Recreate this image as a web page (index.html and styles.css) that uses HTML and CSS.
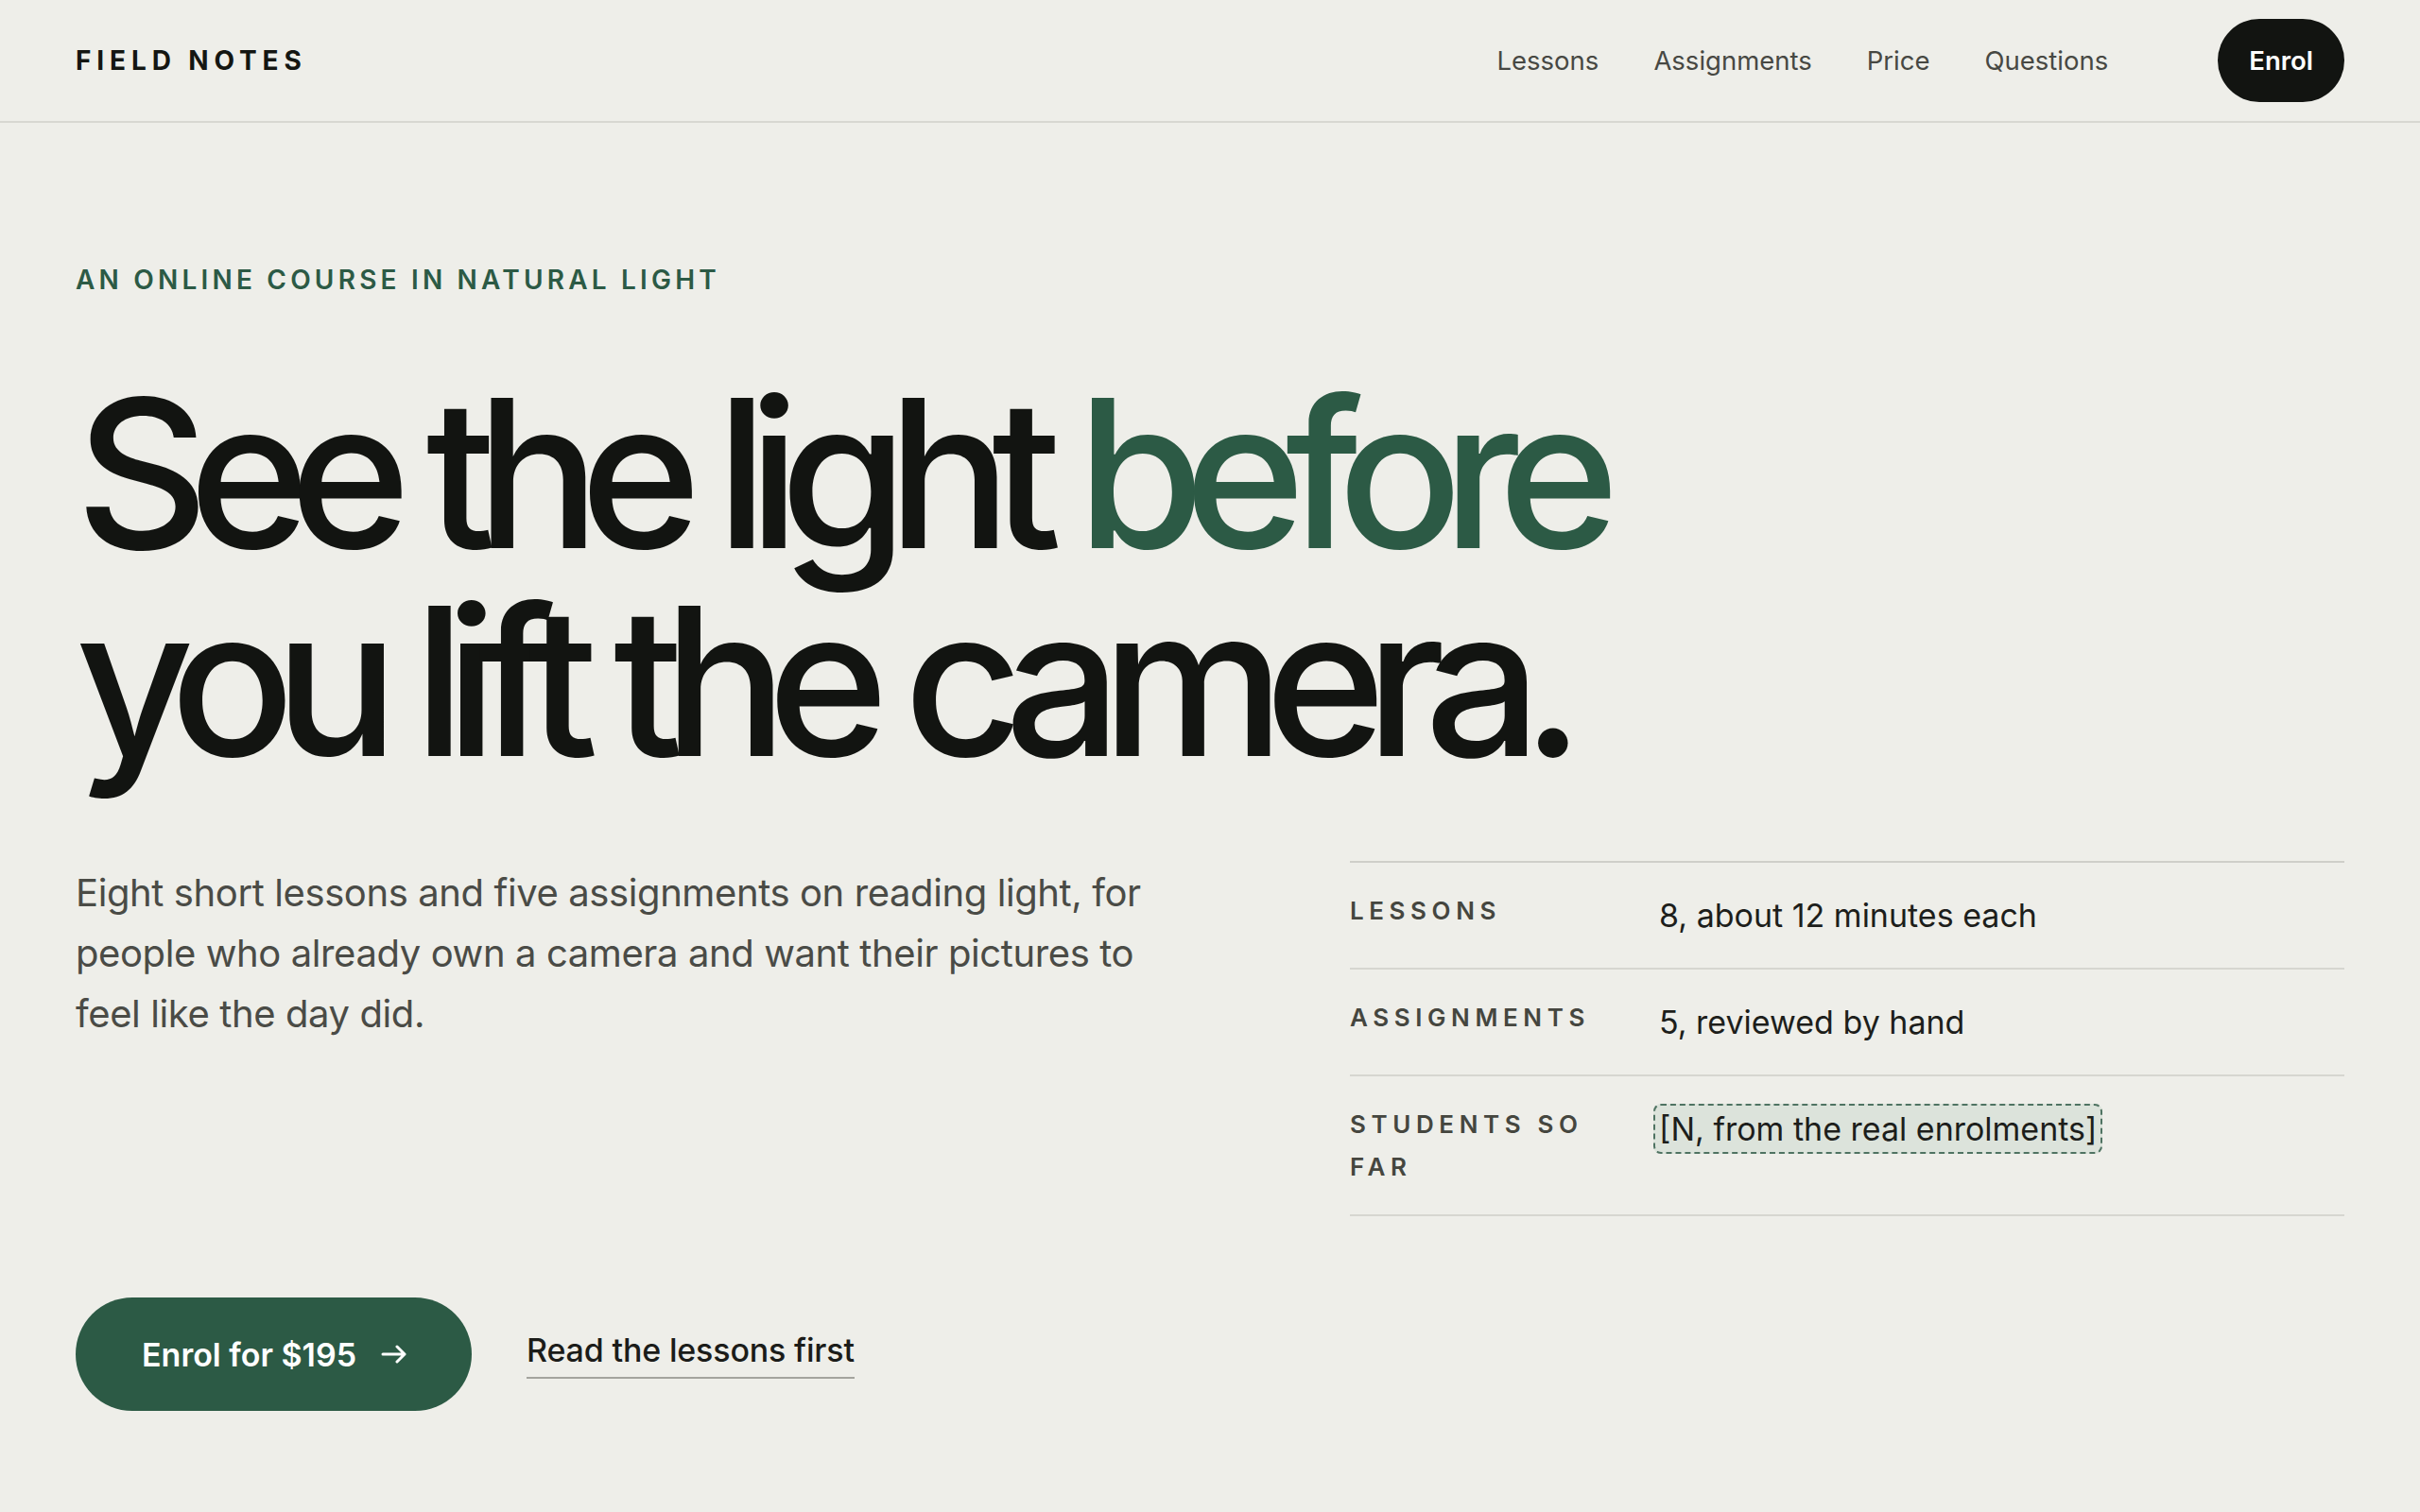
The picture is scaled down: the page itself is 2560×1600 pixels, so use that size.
FILE: index.html
```html
<!DOCTYPE html>
<html lang="en">
<head>
<meta charset="utf-8">
<title>Field Notes — An online course in natural light</title>
<link rel="stylesheet" href="styles.css">
</head>
<body>
<header class="site-header">
  <a class="logo" href="#">FIELD NOTES</a>
  <nav class="nav">
    <a class="nav-link" href="#">Lessons</a>
    <a class="nav-link" href="#">Assignments</a>
    <a class="nav-link" href="#">Price</a>
    <a class="nav-link" href="#">Questions</a>
    <a class="nav-cta" href="#">Enrol</a>
  </nav>
</header>
<main class="hero">
  <p class="eyebrow">AN ONLINE COURSE IN NATURAL LIGHT</p>
  <h1 class="headline">See the light <span class="accent">before</span><br>you lift the camera.</h1>
  <div class="hero-grid">
    <p class="lede">Eight short lessons and five assignments on reading light, for people who already own a camera and want their pictures to feel like the day did.</p>
    <dl class="facts">
      <div class="fact">
        <dt class="fact-label">LESSONS</dt>
        <dd class="fact-value">8, about 12 minutes each</dd>
      </div>
      <div class="fact">
        <dt class="fact-label">ASSIGNMENTS</dt>
        <dd class="fact-value">5, reviewed by hand</dd>
      </div>
      <div class="fact">
        <dt class="fact-label">STUDENTS SO FAR</dt>
        <dd class="fact-value"><span class="placeholder">[N, from the real enrolments]</span></dd>
      </div>
    </dl>
  </div>
  <div class="actions">
    <a class="btn-primary" href="#">Enrol for $195
      <svg class="arrow" width="28" height="20" viewBox="0 0 28 20" aria-hidden="true"><path d="M2 10H25M17 2l8 8-8 8" fill="none" stroke="currentColor" stroke-width="3" stroke-linecap="round" stroke-linejoin="round"/></svg>
    </a>
    <a class="link-secondary" href="#">Read the lessons first</a>
  </div>
</main>
</body>
</html>
```
FILE: styles.css
```css
* { box-sizing: border-box; }
html, body { margin: 0; padding: 0; }
body {
  background: #eeeee9;
  color: #121411;
  font-family: Inter, "Noto Sans", sans-serif;
  min-height: 1600px;
}
a { text-decoration: none; color: inherit; }

.site-header {
  height: 130px;
  padding: 0 80px;
  display: flex;
  align-items: center;
  justify-content: space-between;
  border-bottom: 2px solid #d7d7d1;
}
.logo {
  font-size: 28px;
  font-weight: 700;
  letter-spacing: 0.21em;
  color: #141612;
}
.nav {
  display: flex;
  align-items: center;
  gap: 58px;
}
.nav-link {
  font-size: 27.5px;
  color: #474843;
}
.nav-cta {
  margin-left: 58px;
  background: #121411;
  color: #ffffff;
  font-size: 27.5px;
  font-weight: 600;
  height: 88px;
  padding: 0 33px;
  border-radius: 44px;
  display: flex;
  align-items: center;
}

.hero {
  padding: 147px 80px 0;
}
.eyebrow {
  margin: 0;
  font-size: 28px;
  line-height: 1.4;
  font-weight: 600;
  letter-spacing: 0.15em;
  color: #2c5a45;
}
.headline {
  margin: 75px 0 0;
  font-size: 218px;
  line-height: 220px;
  font-weight: 460;
  letter-spacing: -0.097em;
  color: #121411;
}
.accent { color: #2c5a45; }

.hero-grid {
  margin-top: 80px;
  display: grid;
  grid-template-columns: 1fr 1052px;
  column-gap: 190px;
  align-items: start;
}
.lede {
  margin: 2px 0 0;
  font-size: 40px;
  line-height: 64px;
  letter-spacing: -0.01em;
  color: #4a4b46;
}
.facts {
  margin: 0;
  border-top: 2px solid #cfcfc9;
}
.fact {
  display: grid;
  grid-template-columns: 327px 1fr;
  padding: 28px 0;
  border-bottom: 2px solid #d6d6d0;
}
.fact-label {
  margin: 0;
  font-size: 26px;
  line-height: 45px;
  font-weight: 600;
  letter-spacing: 0.215em;
  color: #45463f;
  padding-right: 24px;
}
.fact-value {
  margin: 0;
  font-size: 34px;
  line-height: 55px;
  color: #1d1e1b;
}
.placeholder {
  background: #dce3db;
  border: 2px dashed #4f7362;
  border-radius: 8px;
  padding: 4px 4px;
  margin-left: -6px;
}

.actions {
  margin-top: 86px;
  display: flex;
  align-items: center;
  gap: 58px;
}
.btn-primary {
  height: 120px;
  padding: 0 68px 0 70px;
  border-radius: 60px;
  background: #2c5a45;
  color: #ffffff;
  font-size: 34px;
  font-weight: 600;
  display: flex;
  align-items: center;
  gap: 26px;
}
.arrow { display: block; }
.link-secondary {
  font-size: 34px;
  font-weight: 500;
  letter-spacing: -0.005em;
  color: #1b1c19;
  padding-bottom: 8px;
  border-bottom: 2px solid #a4a49e;
}
```
